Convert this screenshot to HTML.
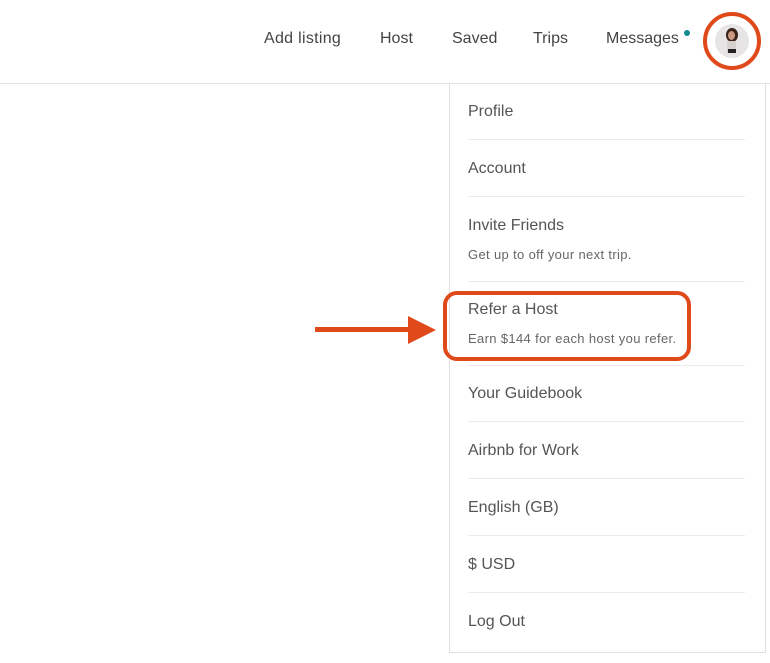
<!DOCTYPE html>
<html><head><style>
*{margin:0;padding:0;box-sizing:border-box}
body{width:770px;height:663px;background:#fff;font-family:"Liberation Sans",sans-serif;position:relative;overflow:hidden;color:#484848}
.hdr{position:absolute;left:0;top:0;width:770px;height:84px;border-bottom:1px solid #e4e4e4}
.nav{position:absolute;top:30px;font-size:16px;color:#444}
.panel{position:absolute;left:449px;top:84px;width:317px;height:569px;border:1px solid #e0e0e0;border-top:none;background:#fff}
.t{position:absolute;left:468px;font-size:16px;color:#555;margin-top:1px}
.s{position:absolute;left:468px;font-size:13px;color:#666;letter-spacing:0.35px;margin-top:1px}
.d{position:absolute;left:468px;width:277px;height:1px;background:#ebebeb}
</style></head><body>
<div class="hdr"></div>
<div class="nav" style="left:264px;letter-spacing:0.3px">Add listing</div>
<div class="nav" style="left:380px">Host</div>
<div class="nav" style="left:452px">Saved</div>
<div class="nav" style="left:533px">Trips</div>
<div class="nav" style="left:606px">Messages</div>
<div style="position:absolute;left:684px;top:30px;width:6px;height:6px;border-radius:50%;background:#138a90"></div>
<div style="position:absolute;left:703px;top:12px;width:58px;height:58px;border-radius:50%;border:4px solid #e04a1a"></div>
<div style="position:absolute;left:715px;top:24px;width:34px;height:34px;border-radius:50%;background:#e6e4e4;overflow:hidden">
<div style="position:absolute;left:11px;top:4px;width:12px;height:14px;border-radius:50%;background:#3a2218"></div>
<div style="position:absolute;left:13px;top:7px;width:7px;height:9px;border-radius:50%;background:#c89880"></div>
<div style="position:absolute;left:12px;top:17px;width:9px;height:12px;background:#d8d0cc"></div>
<div style="position:absolute;left:13px;top:25px;width:8px;height:4px;background:#222"></div>
</div>
<div class="panel"></div>
<div class="t" style="top:102px">Profile</div>
<div class="d" style="top:139px"></div>
<div class="t" style="top:159px">Account</div>
<div class="d" style="top:196px"></div>
<div class="t" style="top:216px">Invite Friends</div>
<div class="s" style="top:246px">Get up to off your next trip.</div>
<div class="d" style="top:281px"></div>
<div class="t" style="top:300px">Refer a Host</div>
<div class="s" style="top:330px">Earn $144 for each host you refer.</div>
<div class="d" style="top:365px"></div>
<div class="t" style="top:384px">Your Guidebook</div>
<div class="d" style="top:421px"></div>
<div class="t" style="top:441px">Airbnb for Work</div>
<div class="d" style="top:478px"></div>
<div class="t" style="top:498px">English (GB)</div>
<div class="d" style="top:535px"></div>
<div class="t" style="top:555px">$ USD</div>
<div class="d" style="top:592px"></div>
<div class="t" style="top:612px">Log Out</div>
<div style="position:absolute;left:443px;top:291px;width:248px;height:70px;border:4px solid #e04a1a;border-radius:14px"></div>
<div style="position:absolute;left:315px;top:327px;width:96px;height:5px;background:#e04a1a"></div>
<div style="position:absolute;left:408px;top:316px;width:0;height:0;border-top:14px solid transparent;border-bottom:14px solid transparent;border-left:28px solid #e04a1a"></div>
</body></html>
